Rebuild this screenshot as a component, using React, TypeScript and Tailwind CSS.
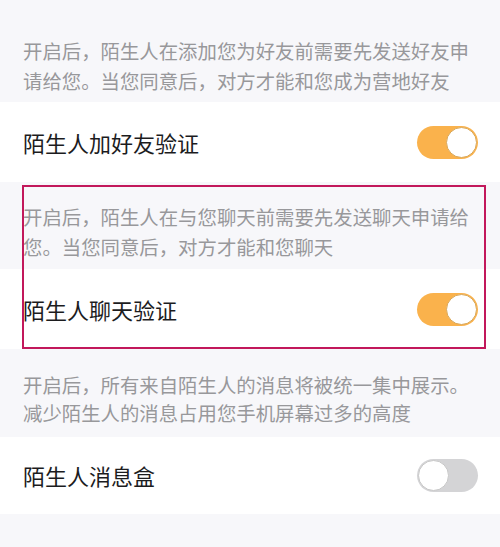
import React from "react";

function Toggle({ on }: { on: boolean }) {
  return (
    <div
      className={
        "flex h-[33px] w-[61px] items-center rounded-full p-[1px] " +
        (on ? "justify-end bg-[#fab24c]" : "justify-start bg-[#d4d4d6]")
      }
    >
      <div
        className={
          "h-[31px] w-[31px] rounded-full bg-white border " +
          (on ? "border-[#d9a85a]" : "border-[#c8c8c8]")
        }
      />
    </div>
  );
}

function Desc({ lines, pt, pb, lh }: { lines: string[]; pt: string; pb: string; lh: string }) {
  return (
    <div className={"bg-[#f7f7fa] pl-[23px] pr-2 text-[19.4px] text-[#98989b] " + pt + " " + pb + " " + lh}>
      {lines.map((l, i) => (
        <div key={i} className="whitespace-nowrap">
          {l}
        </div>
      ))}
    </div>
  );
}

function Row({ title, on, h }: { title: string; on: boolean; h: string }) {
  return (
    <div className={"flex items-center justify-between bg-white pl-[23px] pr-[22px] " + h}>
      <div className="text-[22px] text-[#1c1c1e]">{title}</div>
      <Toggle on={on} />
    </div>
  );
}

export default function App() {
  return (
    <div
      className="flex h-[547px] w-[500px] flex-col overflow-hidden bg-[#f7f7fa]"
      style={{ fontFamily: '"Noto Sans CJK SC", "Noto Sans", sans-serif' }}
    >
      <Desc
        lines={["开启后，陌生人在添加您为好友前需要先发送好友申", "请给您。当您同意后，对方才能和您成为营地好友"]}
        pt="pt-[36px]"
        pb="pb-[6px]"
        lh="leading-[30px]"
      />
      <Row title="陌生人加好友验证" on={true} h="h-[80px]" />
      <div className="relative">
        <Desc
          lines={["开启后，陌生人在与您聊天前需要先发送聊天申请给", "您。当您同意后，对方才能和您聊天"]}
          pt="pt-[20px]"
          pb="pb-[7px]"
          lh="leading-[30px]"
        />
        <Row title="陌生人聊天验证" on={true} h="h-[80px]" />
        <div className="pointer-events-none absolute left-[22px] top-[3px] h-[164px] w-[464px] border-2 border-[#c2185b]" />
      </div>
      <Desc
        lines={["开启后，所有来自陌生人的消息将被统一集中展示。", "减少陌生人的消息占用您手机屏幕过多的高度"]}
        pt="pt-[22px]"
        pb="pb-[10px]"
        lh="leading-[28px]"
      />
      <Row title="陌生人消息盒" on={false} h="h-[77px]" />
      <div className="flex-1 bg-[#f7f7fa]" />
    </div>
  );
}
